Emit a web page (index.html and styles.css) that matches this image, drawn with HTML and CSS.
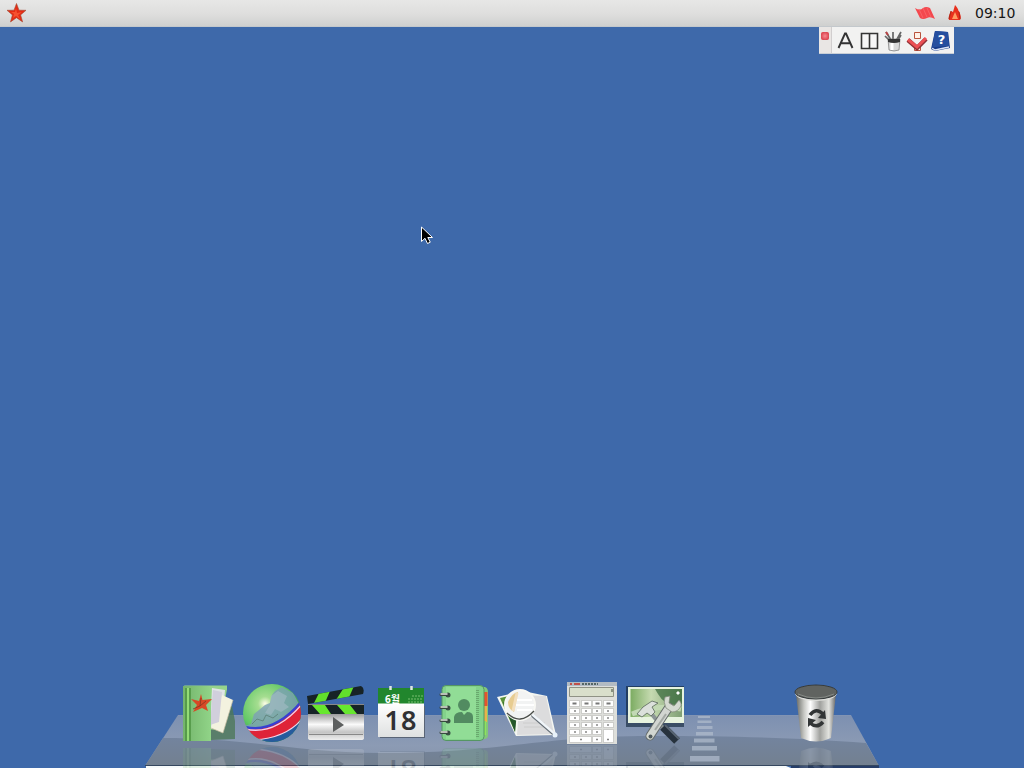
FILE: index.html
```html
<!DOCTYPE html>
<html lang="ko">
<head>
<meta charset="utf-8">
<title>Desktop</title>
<link rel="stylesheet" href="styles.css">
</head>
<body>
<header class="menubar">
  <svg class="star" width="22" height="22" viewBox="0 0 22 22"><path d="m11.500 1.500 2.500 6.700 7 .1-5.400 4.600 2 7-6.100-4.200-6 4.200 1.900-7L2 8.300l7-.1z" fill="#e42b14" stroke="#a3482f" stroke-width=".6"/><path d="m11 6 1 5 5-1-4 3 2 4-4-3-3 2 1-4-3-2h4z" fill="#f5512e"/></svg>
  <div class="tray">
    <svg width="22" height="18" viewBox="0 0 22 18"><path d="M1 4q5 3 8 0 3-2 7 0l5 11q-5-3-8-1-4 2-7 0z" fill="#f4484e"/><path d="m5 5 4 9m0-10 4 9m0-9 4 9" stroke="#f8696c" stroke-width=".8" fill="none"/></svg>
    <svg width="14" height="18" viewBox="0 0 14 18"><path d="M7 1c4 4 3 6 4 6 1 3 3 6 1 9H1c-1-4 1-6 2-9l2 1z" fill="#e8301d"/><path d="m7 8 3 7H4z" fill="#ff9d62"/><path d="M3 7 1 15M11 8l1 7" stroke="#a92919"/></svg>
    <time class="clock">09:10</time>
  </div>
</header>

<main class="desktop">
  <div class="imebar">
    <div class="grip"><i></i></div>
    <div class="tools">
      <svg viewBox="0 0 24 27"><path d="m6.500 21 6.500-14.500h1L20.500 21M8.500 16.200h10" fill="none" stroke="#333" stroke-width="1.900"/></svg>
      <svg viewBox="0 0 24 27"><path d="M5.500 6.500h16v15h-16zM13.500 6.500v15" fill="#f6f6f6" stroke="#343434" stroke-width="1.600"/></svg>
      <svg viewBox="0 0 24 27"><path d="m6 5 5 8m2-8v8m8-8-5 9M5 9l4 4m12-5-3 5" stroke="#666" stroke-width="1.700"/><path d="m6 5 2 3" stroke="#b44" stroke-width="2"/><path d="M8 12h12l-1 11q-5 2-10 0z" fill="#d9d9d9" stroke="#777" stroke-width=".7"/><path d="M8 12h12v3q-6 2-12 0z" fill="#333"/><path d="M12 16v7" stroke="#fff" stroke-width="3"/></svg>
      <svg viewBox="0 0 24 27"><path d="M10.500 5.500h6v6h-6zM10.500 18.500h6v5h-6z" fill="#fff1e7" stroke="#b9533d"/><path d="m4 13 9 8 9-9" fill="none" stroke="#8f3034" stroke-width="4.500"/><path d="m4 12.500 9 7.500 9-9" fill="none" stroke="#ec5054" stroke-width="3"/></svg>
      <svg viewBox="0 0 24 27"><path d="m7 4 13 1 2 16-15 3-4-2z" fill="#173b8b"/><path d="m4 21 3 2 14-3" fill="none" stroke="#dce4f5" stroke-width="1.500"/><path d="m7 4 13 1 1 14-14 1-3 1z" fill="#264f9f"/><text x="13.500" y="17" class="qmark">?</text></svg>
    </div>
  </div>
  <svg class="pointer" width="14" height="20" viewBox="0 0 14 20"><path d="M1.500 1v14.500L5 12.300l2.500 5.200 2.800-1.300-2.500-4.700h4.700z" fill="#000" stroke="#fff"/></svg>
</main>

<footer class="dock">
  <svg class="shelf" viewBox="0 0 1024 90">
    <defs>
      <linearGradient id="glass" x2="0" y2="1"><stop stop-color="#7d90b1"/><stop offset=".6" stop-color="#8c9bb4"/><stop offset="1" stop-color="#8593a9"/></linearGradient>
      <linearGradient id="shade" x2="0" y2="1"><stop stop-color="#73849f"/><stop offset="1" stop-color="#738090"/></linearGradient>
    </defs>
    <path d="M178 37h673l28 51H145z" fill="url(#glass)"/>
    <path d="M163 60C250 60 300 75 380 75c120 0 160-17 270-17 90 0 150 2 216 7l13 23H145z" fill="url(#shade)"/>
    <path d="M178 37.500h673" stroke="#8294b3"/>
    <path d="M145 87.500h734" stroke="#35475f"/>
    <path d="M146 88h640l5 2H146z" fill="#f7fafa"/>
    <path d="M791 89h88" stroke="#263d68" stroke-width="2"/>
  </svg>
  <nav class="apps">
    <svg viewBox="0 0 64 90"><defs><linearGradient id="book"><stop stop-color="#73b46b"/><stop offset="1" stop-color="#91d488"/></linearGradient></defs>
      <g id="files"><path d="M34 28h22l3 15v18l-25 1z" fill="#4d7857" opacity=".8"/><path d="M8 7.500h43v4l-8 40H34z" fill="#96d38b"/><path d="m36 10 13 2-3 36-12 3z" fill="#dfe4e5"/><path d="m46 17 11 5-10 33-12-5z" fill="#f3f2df"/><path d="m35 50 12 5 10-33" stroke="#c3ba9d" stroke-width=".7" fill="none"/><path d="m37 12 9 2-3 30-9 3z" fill="#d1cfdc"/><path d="M7 8h25q3 0 3 4v51H7z" fill="url(#book)"/><path d="M10 10v53M14 10v53" stroke="#377f28"/><path d="M12 10v53" stroke="#9ee779" stroke-width="1.500"/><path d="m25 16 1.500 6 9.500-1-6 6 2 6-6-3-9 4 4-7-6-6 8 2z" fill="#d74925"/><path d="m25 20-1 8-7 3m7-3 6-5" stroke="#81361f" fill="none" stroke-width=".8"/></g>
      <use href="#files" class="mirror"/></svg>
    <svg viewBox="0 0 64 90"><defs><radialGradient id="globe" cx=".38" cy=".34" r=".72"><stop stop-color="#fffde8"/><stop offset=".17" stop-color="#a5dd90"/><stop offset=".6" stop-color="#62c866"/><stop offset="1" stop-color="#2b8449"/></radialGradient><clipPath id="ball"><circle cx="32" cy="35" r="29"/></clipPath></defs>
      <g id="web"><circle cx="32" cy="35" r="29" fill="url(#globe)"/><g clip-path="url(#ball)"><path d="m14 36 5-4 6-5 5-2 2-8 3-4 7-4 11 6 7 13-8 14-25 13-20 1-3-8 7-2z" fill="#7c9fb5" opacity=".8"/><path d="m31 18 7-5 9 5-3 7 5 4-8 5-6-3-4 6-6-2 5-8z" fill="#a2bac3" opacity=".65"/><path d="m12 46 5-5 6 2 3-6 7 3 5-4" stroke="#57796f" fill="none" stroke-width=".7"/><path d="M5 50q28 6 57-26v15Q48 61 14 62z" fill="#df2338"/><path d="M12 62q31 0 50-20v24H16z" fill="#265b9d"/><path d="M5 49q29 7 57-26" stroke="#3840d2" stroke-width="2.500" fill="none"/><path d="M5 51q30 7 57-25M14 62q32-2 48-21" stroke="#f1d1ea" stroke-width="1.300" fill="none"/></g></g>
      <use href="#web" class="mirror"/></svg>
    <svg viewBox="0 0 64 90"><defs><linearGradient id="slate" x2="0" y2="1"><stop stop-color="#9b9b9b"/><stop offset=".4" stop-color="#fafafa"/><stop offset=".7" stop-color="#c4c4c4"/><stop offset="1" stop-color="#eee"/></linearGradient><clipPath id="arm"><path d="m3 18 54-10q4 2 2 8L4 26z"/></clipPath><clipPath id="bar"><path d="M4 27h56v9H4z"/></clipPath></defs>
      <g id="movie"><g clip-path="url(#arm)"><path d="M3 8h57v21H3z" fill="#172326"/><path d="m15 15 11-2-6 14H9zm24-4 11-3-7 16-13 1z" fill="#62df2c"/></g><path d="M4 27h56v9H4z" fill="#172326"/><g clip-path="url(#bar)"><path d="m8 27 8 9h11l-6-9zm25 0 8 9h12l-7-9z" fill="#67e72e"/></g><path d="M4 36h56v24q0 2-3 2H7q-3 0-3-2z" fill="url(#slate)"/><path d="M5 56.500h54M4 26.500h56" stroke="#888"/><path d="m29 39 11 8-11 7z" fill="#5d5f5f"/></g>
      <use href="#movie" class="mirror"/></svg>
    <svg viewBox="0 0 64 90"><defs><linearGradient id="page" x2="0" y2="1"><stop stop-color="#fff"/><stop offset="1" stop-color="#dfe1e1"/></linearGradient></defs>
      <g id="calendar"><path d="M12 28h45v32H12z" fill="#596476"/><path d="M10 10h46v17H10z" fill="#21862d"/><path d="M10 25.500h46V59H10z" fill="url(#page)"/><path d="M44 18h11M40 21h15M40 24h15" stroke="#78be70" stroke-dasharray="2 1"/><path d="M22.500 8v4M43.500 8v4" stroke="#e0e7e1" stroke-width="2.500"/><text x="17" y="25" class="month">6월</text><text x="33" y="51.500" class="date">18</text></g>
      <use href="#calendar" class="mirror"/></svg>
    <svg viewBox="0 0 64 90">
      <g id="contacts"><path d="M48 9h5q3 1 3 5v43q0 4-4 4h-4z" fill="#83c778"/><path d="M52 14h3.500v14H52z" fill="#e6532e"/><path d="M52 28h3v16h-3z" fill="#e9b24a"/><path d="M52 43h2v14h-2z" fill="#8ee35f"/><rect x="10" y="7.500" width="42" height="55" rx="4" fill="#83d28b" stroke="#559663"/><path d="M14 9h30v52H14z" fill="#91dd96"/><path d="M45.500 12v48" stroke="#6aa86e" stroke-width="3" stroke-dasharray="1 1"/><circle cx="32" cy="27" r="6" fill="#528b61"/><path d="M22 45v-6q1-5 8-5l2 3 3-3q6 0 6 5v6z" fill="#528b61"/><g fill="#395345"><circle cx="16" cy="17" r="2.500"/><circle cx="16" cy="30" r="2.500"/><circle cx="16" cy="43" r="2.500"/><circle cx="16" cy="55" r="2.500"/></g><path d="M9 16.500h7M9 29.500h7M9 42.500h7M9 54.500h7" stroke="#38473f" stroke-width="3" stroke-linecap="round"/><path d="M9 16h6M9 29h6M9 42h6M9 54h6" stroke="#e3e9df" stroke-width="1.500" stroke-linecap="round"/></g>
      <use href="#contacts" class="mirror"/></svg>
    <svg viewBox="0 0 64 90">
      <g id="preview"><path d="m1 19 26-6 24 5 9 39-40 1z" fill="#f4f6f1"/><path d="m4 20 17-4-2 38z" fill="#5a913a"/><path d="m7 24 14 10-2 20z" fill="#24562a"/><path d="m24 17 26 1 8 38-37 1z" fill="#dcdcdd"/><path d="M27 45h22M28 49h23" stroke="#ccc"/><circle cx="24" cy="27" r="15" fill="#f2f3f3" stroke="#f8f8f4" stroke-width="2"/><path d="M12 24q4-9 10-10l-4 20q-6-3-6-10z" fill="#e7cc91"/><path d="m21 15-4 18" stroke="#f3dfbe" stroke-width="3"/><path d="M21 22h15M20 27h18M21 32h15" stroke="#fff" stroke-width="2"/><path d="M11 35q13 13 27-2" stroke="#4a4d49" stroke-width="1.300" fill="none"/><path d="m37 38 22 19" stroke="#666f77" stroke-width="3.500" stroke-linecap="round"/><path d="m37 37 22 19" stroke="#f1f6fa" stroke-width="2.500" stroke-linecap="round"/><circle cx="59" cy="57" r="2.500" fill="#e7f1fa"/></g>
      <use href="#preview" class="mirror"/></svg>
    <svg viewBox="0 0 64 90">
      <g id="calculator"><path d="M7 4h50v62H7z" fill="#dedfdb"/><path d="M7 4h50v4H7z" fill="#b2bbc3"/><path d="M10 6h2m2 0h6" stroke="#c0504a" stroke-width="2"/><path d="M22 6h16" stroke="#566" stroke-width="2" stroke-dasharray="2 1"/><path d="M9.500 9.500h44v9h-44z" fill="#d9dfcb" stroke="#8f9285"/><path d="M52 11v3" stroke="#384335"/><g fill="#fff" stroke="#b5b6b2" stroke-width=".6"><path d="M9.500 22.500h10v6h-10zm12 0h10v6h-10zm11 0h9v6h-9zm11 0h10v6h-10zM9.500 30.500h10v5h-10zm12 0h10v5h-10zm11 0h9v5h-9zm11 0h10v5h-10zM9.500 37.500h10v5h-10zm12 0h10v5h-10zm11 0h9v5h-9zm11 0h10v5h-10zM9.500 44.500h10v5h-10zm12 0h10v5h-10zm11 0h9v5h-9zm11 0h10v5h-10zM9.500 51.500h10v5h-10zm12 0h10v5h-10zm11 0h9v5h-9zm11 0h10v13h-10zM9.500 58.500h22v6h-22zm23 0h9v6h-9z"/></g><path d="M12.500 25.500h4m8 0h4m7 0h4m7 0h4" stroke="#777" stroke-width="2"/><path d="M14 33h2m9 0h2m9 0h2m9 0h2M14 40h2m9 0h2m9 0h2m9 0h2M14 47h2m9 0h2m9 0h2m9 0h2M14 54h2m9 0h2m9 0h2M20 61.500h2m14 0h2m9 0h2" stroke="#888" stroke-width="1.300"/></g>
      <use href="#calculator" class="mirror"/></svg>
    <svg viewBox="0 0 64 90"><defs><linearGradient id="photo"><stop stop-color="#7cac62"/><stop offset=".4" stop-color="#c5dab0"/><stop offset="1" stop-color="#7f9f74"/></linearGradient></defs>
      <g id="settings"><path d="M2 8h58v41H2z" fill="#14283e" opacity=".65"/><path d="M4 9h56v36H4z" fill="#e7f3df"/><path d="M6.500 11H58v28H6.500z" fill="url(#photo)"/><path d="M31 11h27v15Q42 30 34 16z" fill="#356739" opacity=".7"/><path d="M8 36q25-10 49-5" stroke="#c2d9b4" stroke-width="5" fill="none"/><path d="m54 13 2 2-2 2-2-2z" fill="#fff"/><path d="m26 34 13 16" stroke="#8b9495" stroke-width="4"/><path d="m39 49 14 14" stroke="#27323d" stroke-width="8"/><path d="m41 47 14 14" stroke="#586572" stroke-width="2"/><path d="m13 36 6-7 9-6 6 2-6 4 3 5-4 4-4-3-5 4z" fill="#dbe0db" stroke="#59675a" stroke-width=".8"/><path d="m26 58 19-29" stroke="#646b6a" stroke-width="9" stroke-linecap="round"/><path d="m26 58 19-29" stroke="#d2d6d1" stroke-width="7" stroke-linecap="round"/><path d="M42 30q-3-6-1-11l5-1-1 7 5 3 5-6q3 3 2 6-3 6-9 6z" fill="#d5dad1" stroke="#7b8475" stroke-width=".7"/><circle cx="26.500" cy="58.500" r="2" fill="#505a5d"/><path d="m31 52 11-16" stroke="#a3a9a4" stroke-width="2"/></g>
      <use href="#settings" class="mirror"/></svg>
    <svg class="divider" viewBox="0 0 32 90"><path d="M10 38h12v2H10zM9.500 42.500h14v2.500h-14zM9 48h15.500v3H9zM8 54h17v3.500H8zM6 60.500h20.500v4H6zM4 68h25v4.500H4zM2 78h29.500v5.500H2z" fill="#adb9cb" opacity=".75"/></svg>
    <svg class="trash" viewBox="0 0 64 90"><defs><linearGradient id="metal"><stop stop-color="#666864"/><stop offset=".2" stop-color="#c6c7c3"/><stop offset=".36" stop-color="#fff"/><stop offset=".6" stop-color="#a0a19e"/><stop offset=".82" stop-color="#e3e4e0"/><stop offset="1" stop-color="#666"/></linearGradient></defs>
      <g id="bin"><path d="M12 16h40l-5 44q-15 7-30 0z" fill="url(#metal)"/><ellipse cx="32" cy="15" rx="21" ry="8" fill="#dcddd9"/><ellipse cx="32" cy="14" rx="21" ry="7" fill="#606360" stroke="#353a3b"/><path d="M14 16q18 8 36 0" stroke="#858985" fill="none"/><path d="M26 37q6-8 13-1M39 44q-6 7-13 1" stroke="#323536" stroke-width="3.500" fill="none"/><path d="m41 32 1 9-8-1zM24 49v-9l8 2z" fill="#323536"/></g>
      <use href="#bin" class="mirror"/></svg>
  </nav>
</footer>
</body>
</html>
```
FILE: styles.css
```css
* { box-sizing: border-box; }
body {
  margin: 0;
  width: 100vw;
  height: 100vh;
  overflow: hidden;
  display: flex;
  flex-direction: column;
  background: #3e69aa;
  font-family: "DejaVu Sans", "Noto Sans CJK KR", sans-serif;
}
svg { display: block; flex: none; }
.menubar {
  height: 27px;
  flex: none;
  display: flex;
  align-items: center;
  justify-content: space-between;
  padding: 0 8px 1px 5px;
  background: linear-gradient(#e7e7e6, #dededd 55%, #cfd0cf);
  border-bottom: 1px solid #c3c8cc;
}
.tray { display: flex; align-items: center; }
.tray svg + svg { margin-left: 12px; }
.clock {
  margin-left: 13px;
  padding-top: 1px;
  font-size: 14px;
  line-height: 20px;
  color: #151515;
  width: 41px;
  white-space: nowrap;
}
.desktop { flex: 1; position: relative; }
.imebar {
  display: flex;
  width: 135px;
  height: 27px;
  margin-left: 819px;
  background: #f2f2f1;
  border-bottom: 1px solid #c8ced6;
}
.grip {
  width: 13px;
  padding: 5px 2px;
  background: #e9e6e4;
  border-right: 1px solid #d1cece;
}
.grip i { display: block; width: 8px; height: 8px; border-radius: 2px; background: radial-gradient(#f58a91, #d32b38); }
.tools { display: flex; }
.tools svg { width: 24px; height: 27px; }
.qmark { font: bold 13px "DejaVu Sans", sans-serif; fill: #fff; text-anchor: middle; }
.pointer { position: absolute; left: 420px; top: 199px; }
.dock { position: relative; height: 90px; flex: none; }
.shelf { position: absolute; inset: 0; width: 1024px; height: 90px; }
.apps { position: relative; display: flex; padding-left: 176px; }
.apps svg { width: 64px; height: 90px; overflow: hidden; }
.apps .divider { width: 32px; }
.apps .trash { margin-left: 64px; }
.mirror { transform: translateY(133px) scaleY(-1); opacity: .16; }
.month { font: bold 10px "Noto Sans", "Noto Sans CJK KR", sans-serif; fill: #fff; }
.date { font: 600 27px "Noto Sans", sans-serif; fill: #303033; text-anchor: middle; letter-spacing: 1px; }
```
